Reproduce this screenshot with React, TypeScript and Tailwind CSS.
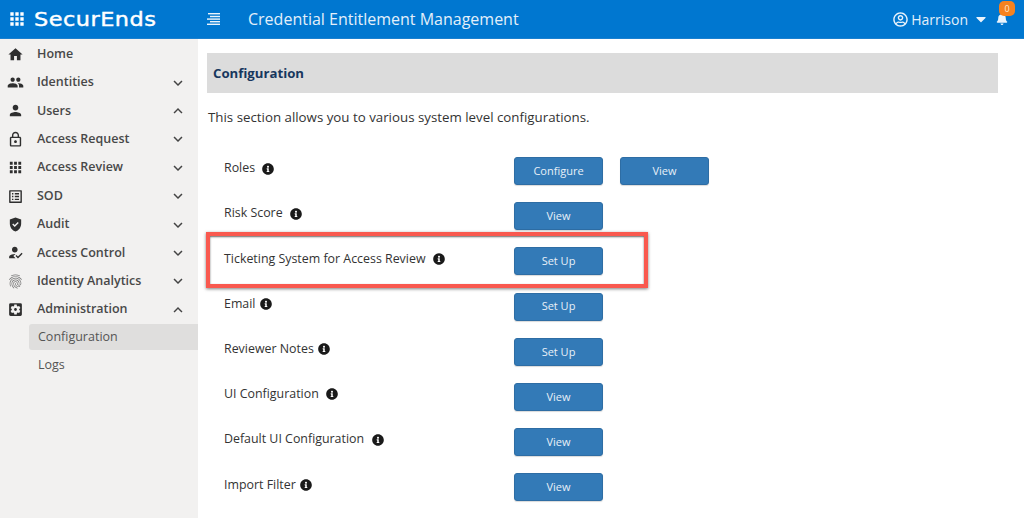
import React from 'react';
import {
  MdApps,
  MdHome,
  MdPeople,
  MdPerson,
  MdOutlineLock,
  MdListAlt,
  MdGppGood,
  MdHowToReg,
  MdFingerprint,
  MdSettingsApplications,
  MdKeyboardArrowDown,
  MdKeyboardArrowUp,
} from 'react-icons/md';
import { FaInfoCircle, FaBell, FaRegUserCircle, FaCaretDown } from 'react-icons/fa';

const navItems = [
  { label: 'Home', icon: MdHome },
  { label: 'Identities', icon: MdPeople, arrow: 'down' },
  { label: 'Users', icon: MdPerson, arrow: 'up' },
  { label: 'Access Request', icon: MdOutlineLock, arrow: 'down' },
  { label: 'Access Review', icon: MdApps, arrow: 'down' },
  { label: 'SOD', icon: MdListAlt, arrow: 'down' },
  { label: 'Audit', icon: MdGppGood, arrow: 'down' },
  { label: 'Access Control', icon: MdHowToReg, arrow: 'down' },
  { label: 'Identity Analytics', icon: MdFingerprint, arrow: 'down', faded: true },
  { label: 'Administration', icon: MdSettingsApplications, arrow: 'up' },
];

const configRows = [
  { label: 'Roles', gap: 'ml-[7px]', buttons: ['Configure', 'View'] },
  { label: 'Risk Score', gap: 'ml-[7px]', buttons: ['View'] },
  { label: 'Ticketing System for Access Review', gap: 'ml-[7px]', buttons: ['Set Up'] },
  { label: 'Email', gap: 'ml-[4px]', buttons: ['Set Up'] },
  { label: 'Reviewer Notes', gap: 'ml-[4px]', buttons: ['Set Up'] },
  { label: 'UI Configuration', gap: 'ml-[7px]', buttons: ['View'] },
  { label: 'Default UI Configuration', gap: 'ml-[8px]', buttons: ['View'] },
  { label: 'Import Filter', gap: 'ml-[4px]', buttons: ['View'] },
];

function Sidebar() {
  return (
    <aside className="w-[198px] shrink-0 bg-[#f2f1f0] pt-[1px] text-[#484848]">
      {navItems.map((item) => {
        const Icon = item.icon;
        return (
          <div key={item.label} className="flex h-[28.4px] items-center pl-[6px] pr-[11px]">
            <span className="flex w-[18px] justify-center">
              <Icon size={17} className={item.faded ? 'text-[#777777]' : 'text-[#2f2f2f]'} />
            </span>
            <span className="ml-[13px] flex-1 text-[12.5px] font-semibold">{item.label}</span>
            {item.arrow === 'down' && <MdKeyboardArrowDown size={18} className="text-[#444444]" />}
            {item.arrow === 'up' && <MdKeyboardArrowUp size={18} className="text-[#444444]" />}
          </div>
        );
      })}
      <div className="ml-[29px] flex h-[26px] items-center rounded-l-[3px] bg-[#dfdedd] pl-[9px] text-[12.5px] text-[#555555]">
        Configuration
      </div>
      <div className="ml-[29px] mt-[1px] flex h-[28px] items-center pl-[9px] text-[12.5px] text-[#555555]">Logs</div>
    </aside>
  );
}

function ConfigRow({ label, gap, buttons }: { label: string; gap: string; buttons: string[] }) {
  return (
    <div className="flex h-[45.2px] items-start">
      <div className="flex h-[23px] w-[307px] items-center pl-[17px] text-[12.4px] text-[#333333]">
        <span>{label}</span>
        <FaInfoCircle size={12} className={`${gap} text-[#1a1a1a]`} />
      </div>
      <div className="flex gap-[17px]">
        {buttons.map((b) => (
          <button
            key={b}
            className="h-[28px] w-[89px] rounded-[3px] border border-[#2e6da4] bg-[#337ab7] text-[11px] text-[#e8f0f7] shadow-[0_1px_1px_rgba(0,0,0,0.15)]"
          >
            {b}
          </button>
        ))}
      </div>
    </div>
  );
}

export default function App() {
  return (
    <div className="flex h-[518px] w-[1024px] flex-col overflow-hidden bg-white font-['Open_Sans',sans-serif]">
      <header className="flex h-[39px] shrink-0 items-center border-b border-[#1a80d0] bg-[#0077d0] text-white">
        <div className="flex w-[198px] items-center pl-[7px]">
          <MdApps size={20} />
          <span className="ml-[7px] inline-block origin-left scale-x-[1.18] font-['DejaVu_Sans',sans-serif] text-[19px] leading-none tracking-[0.4px] [-webkit-text-stroke:0.4px_white]">
            SecurEnds
          </span>
        </div>
        <svg width="14" height="14" viewBox="0 0 14 14" className="ml-[9px]" fill="#eaf3fb">
          <rect x="1" y="1" width="12" height="1.4" />
          <rect x="3" y="3.8" width="10" height="1.4" />
          <rect x="0" y="6.4" width="13" height="1.4" />
          <rect x="3" y="9" width="10" height="1.4" />
          <rect x="0" y="11.6" width="13" height="1.4" />
        </svg>
        <span className="ml-[27px] flex-1 text-[16px] text-[#e3effa]">Credential Entitlement Management</span>
        <FaRegUserCircle size={15} className="text-[#eaf3fb]" />
        <span className="ml-[3px] text-[14px] text-[#e3effa]">Harrison</span>
        <FaCaretDown size={16} className="ml-[5px] text-[#eaf3fb]" />
        <div className="relative mr-[16px] ml-[7px]">
          <FaBell size={12} className="text-[#eaf3fb]" />
          <span className="absolute -top-[12px] left-[3px] flex h-[15px] w-[16px] items-center justify-center rounded-[5px] bg-[#f5821f] text-[9px] text-[#fde9d3]">
            0
          </span>
        </div>
      </header>
      <div className="flex flex-1">
        <Sidebar />
        <main className="relative flex-1 pl-[9px] pt-[14px]">
          <div className="mr-[26px] flex h-[40px] items-center bg-[#dcdcdc] pl-[6px] pt-[2px] text-[13.2px] font-bold text-[#17375e]">
            Configuration
          </div>
          <p className="mt-[15px] ml-[1px] h-[49px] text-[13.3px] leading-[19px] text-[#333333]">
            This section allows you to various system level configurations.
          </p>
          {configRows.map((row) => (
            <ConfigRow key={row.label} {...row} />
          ))}
          {/* red highlight drawn over the ticketing row */}
          <div className="absolute left-[8px] top-[193px] h-[56px] w-[442px] border-[4px] border-[#f9594f] shadow-[0_1px_3px_rgba(0,0,0,0.5),inset_0_1px_2px_rgba(0,0,0,0.6)]" />
        </main>
      </div>
    </div>
  );
}
